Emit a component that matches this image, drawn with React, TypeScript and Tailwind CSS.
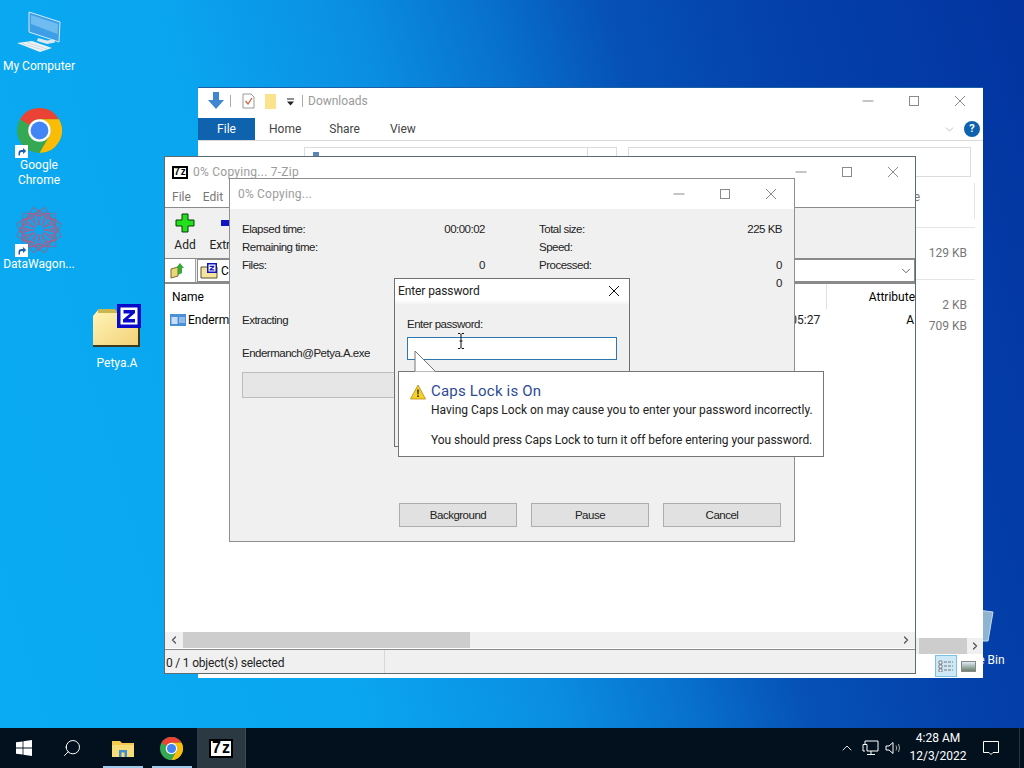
import React from "react";
import { Search, ChevronUp, ChevronDown, ChevronLeft, ChevronRight } from "lucide-react";

function Controls({ color = "#8a8a8a" }: { color?: string }) {
  return (
    <div className="flex items-center gap-[34px]">
      <svg width="12" height="12" viewBox="0 0 12 12"><path d="M.5 6H11.5" stroke={color} strokeWidth="1" /></svg>
      <svg width="12" height="12" viewBox="0 0 12 12"><rect x="1.5" y="1.5" width="9" height="9" fill="none" stroke={color} /></svg>
      <svg width="12" height="12" viewBox="0 0 12 12"><path d="M1 1L11 11M11 1L1 11" stroke={color} /></svg>
    </div>
  );
}

function Logo7z({ w = 18, h = 14 }: { w?: number; h?: number }) {
  return (
    <div style={{ width: w, height: h }} className="bg-black flex items-center justify-center">
      <div className="bg-white flex items-center justify-center gap-px w-[calc(100%-4px)] h-[calc(100%-4px)] font-['Liberation_Sans',sans-serif] font-bold text-black" style={{ fontSize: h - 3, lineHeight: 1 }}>
        <span>7</span><span>z</span>
      </div>
    </div>
  );
}

function ChromeIcon({ size }: { size: number }) {
  return (
    <svg width={size} height={size} viewBox="0 0 48 48">
      <circle cx="24" cy="24" r="24" fill="#34a853" />
      <path d="M24 0A24 24 0 0 1 44.8 12H24A12 12 0 0 0 13.6 18L3.2 12A24 24 0 0 1 24 0Z" fill="#ea4335" />
      <path d="M44.8 12A24 24 0 0 1 24 48L34.4 30A12 12 0 0 0 34.4 18 L24 12Z" fill="#fbbc05" />
      <circle cx="24" cy="24" r="12" fill="#fff" />
      <circle cx="24" cy="24" r="9.5" fill="#4285f4" />
    </svg>
  );
}

function Shortcut() {
  return (
    <svg width="13" height="13" viewBox="0 0 13 13" className="absolute left-[15px] bottom-0">
      <rect width="13" height="13" fill="#fff" />
      <path d="M3.5 10.5V8A3 3 0 0 1 6.5 5H8V3l3.2 3L8 9V7H6.5A1.5 1.5 0 0 0 5 8.5V10.5Z" fill="#1a5fb4" />
    </svg>
  );
}

function WagonIcon() {
  const outer = [0, 30, 60, 90, 120, 150];
  const inner = [0, 30, 60, 90, 120, 150, 180, 210, 240, 270, 300, 330];
  return (
    <svg width="46" height="46" viewBox="0 0 46 46" fill="none">
      {outer.map((a) => (
        <g key={a} transform={`rotate(${a} 23 23)`}>
          <rect x="6.5" y="6.5" width="33" height="33" stroke="#6d78a8" strokeWidth="1.2" opacity="0.75" />
        </g>
      ))}
      {inner.map((a) => (
        <g key={a} transform={`rotate(${a} 23 23)`}>
          <rect x="17" y="6" width="12" height="12" stroke="#b55a84" strokeWidth="1.2" opacity="0.85" transform="rotate(45 23 12)" />
        </g>
      ))}
      <circle cx="23" cy="23" r="5" fill="#12a3ee" />
    </svg>
  );
}

function ComputerIcon() {
  return (
    <svg width="44" height="44" viewBox="0 0 44 44">
      <path d="M12 2L43 12L42 32L12 22Z" fill="#3f9fe6" stroke="#cfeafb" strokeWidth="1" />
      <path d="M14 5L41 14L40.5 24L14 14Z" fill="#6fbcf0" />
      <path d="M21 28L30 30.5L37 29.5L38 32.5L30 34L20 31Z" fill="#dce8ee" />
      <path d="M0 33L15 31L35 38L23 42Z" fill="#eaf2f6" />
      <path d="M5 33.5L26 40M10 32.5L30 39" stroke="#b9c9d2" strokeWidth="0.6" />
    </svg>
  );
}

function ZipFolder() {
  return (
    <svg width="50" height="44" viewBox="0 0 50 44">
      <defs>
        <linearGradient id="zf" x1="0" y1="0" x2="1" y2="1">
          <stop offset="0" stopColor="#fff5b8" />
          <stop offset="1" stopColor="#f3d178" />
        </linearGradient>
      </defs>
      <path d="M1 41V12L6 6H22L26 9H47V41Z" fill="url(#zf)" />
      <path d="M1 41H47V43H1Z" fill="#3c3a1c" />
      <path d="M47 22V43" stroke="#3c3a1c" strokeWidth="2" />
      <path d="M6 5H23L26 9H6Z" fill="#c9b650" />
      <rect x="25" y="0" width="24" height="24" fill="#0a0ac8" />
      <rect x="28.5" y="3.5" width="17" height="17" fill="#fff" />
      <path d="M31.5 6H43V9L36 15H43V18.5H31V15.5L38 9.5H31.5Z" fill="#0a0ac8" />
    </svg>
  );
}

function SmallZip() {
  return (
    <svg width="18" height="16" viewBox="0 0 18 16">
      <path d="M1 15V4H17V15Z" fill="#f5e49c" stroke="#5a5330" />
      <rect x="7" y="0" width="10" height="10" fill="#1313b8" />
      <rect x="8.5" y="1.5" width="7" height="7" fill="#fff" />
      <path d="M9.7 2.8H14.3V4L11.5 6.3H14.3V7.4H9.6V6.3L12.5 3.9H9.7Z" fill="#1313b8" />
    </svg>
  );
}

function Desktop({ label, className, children }: { label: string; className: string; children: React.ReactNode }) {
  return (
    <div className={`absolute w-[78px] flex flex-col items-center text-white text-[12px] leading-[15px] text-center ${className}`}>
      {children}
      <span className="block">{label}</span>
    </div>
  );
}

function Stat({ label, value }: { label: string; value?: string }) {
  return (
    <div className="flex justify-between h-[18px] items-center">
      <span>{label}</span>
      <span>{value}</span>
    </div>
  );
}

function Btn({ children }: { children: React.ReactNode }) {
  return (
    <div className="w-[118px] h-[24px] pt-[1px] bg-[#e1e1e1] border border-[#adadad] flex items-center justify-center text-[#222]">{children}</div>
  );
}

const ui = "font-['Roboto','Liberation_Sans',sans-serif]";
const tahoma = "font-['Liberation_Sans',sans-serif] text-[11.5px] tracking-[-0.5px]";

export default function App() {
  return (
    <div className={`relative w-[1024px] h-[768px] overflow-hidden flex flex-col ${ui} bg-[linear-gradient(74deg,#0aabf2_0%,#0aa6f0_30%,#0a8ee2_46%,#0873cf_56%,#0652b6_66%,#0442ac_78%,#0334a0_100%)]`}>
      {/* Desktop icons */}
      <Desktop label="My Computer" className="left-0 top-[10px] gap-[5px]"><ComputerIcon /></Desktop>
      <Desktop label="Google Chrome" className="left-0 top-[108px]">
        <div className="relative w-[78px] h-[50px] flex justify-center">
          <ChromeIcon size={45} />
          <Shortcut />
        </div>
      </Desktop>
      <Desktop label="DataWagon..." className="left-0 top-[207px]">
        <div className="relative w-[78px] h-[50px] flex justify-center">
          <WagonIcon />
          <Shortcut />
        </div>
      </Desktop>
      <Desktop label="Petya.A" className="left-[78px] top-[304px] gap-[8px]"><ZipFolder /></Desktop>
      <Desktop label="Recycle Bin" className="left-[935px] top-[605px] gap-[10px]">
        <svg width="44" height="38" viewBox="0 0 44 38">
          <path d="M10 3L41 7L36 36L14 36Z" fill="#8fb4d0" stroke="#c9dcea" />
        </svg>
      </Desktop>

      {/* Explorer window */}
      <div className="absolute left-[198px] top-[87px] w-[785px] h-[591px] bg-white border-t border-[#1a5fa8] flex flex-col text-[#555]">
        <div className="h-[30px] flex items-center pl-[9px] pb-[4px] shrink-0">
          <svg width="18" height="18" viewBox="0 0 18 18"><path d="M6 0H12V8H17L9 17L1 8H6Z" fill="#3f86cf" /></svg>
          <span className="w-px h-[12px] bg-[#aaa] ml-[5px] mr-[11px]" />
          <svg width="13" height="16" viewBox="0 0 13 16"><path d="M1 1H9L12 4V15H1Z" fill="#fff" stroke="#9a9a9a" /><path d="M3.5 8L6 11L10 5" fill="none" stroke="#d0623a" strokeWidth="1.3" /></svg>
          <svg width="14" height="17" viewBox="0 0 14 17" className="ml-[9px]"><path d="M1 1H12V16H1Z" fill="#fbe28d" /></svg>
          <svg width="9" height="9" viewBox="0 0 9 9" className="ml-[8px] mt-[2px]"><path d="M1 1H8" stroke="#222" /><path d="M1 3.5H8L4.5 7.5Z" fill="#222" /></svg>
          <span className="w-px h-[12px] bg-[#aaa] ml-[7px] mr-[5px]" />
          <span className="text-[12px] text-[#9a9a9a]">Downloads</span>
          <div className="ml-auto pr-[17px]"><Controls /></div>
        </div>
        <div className="h-[23px] flex items-center border-b border-[#dadada] shrink-0 text-[12px] text-[#444]">
          <div className="w-[57px] h-full bg-[#0f62ad] text-white flex items-center justify-center">File</div>
          <span className="ml-[14px]">Home</span>
          <span className="ml-[28px]">Share</span>
          <span className="ml-[30px]">View</span>
          <ChevronDown size={13} strokeWidth={1.4} className="ml-auto text-[#aaa]" />
          <div className="ml-[8px] mr-[3px] w-[16px] h-[16px] rounded-full bg-[#0f62ad] text-white flex items-center justify-center text-[11px] font-bold">?</div>
        </div>
        <div className="h-[36px] shrink-0 flex items-start pt-[6px] pl-[106px]">
          <div className="h-[30px] w-[313px] border border-[#dcdcdc] flex justify-end pl-[8px]">
            <div className="w-[6px] h-[5px] bg-[#5b85b8] mt-[4px] mr-auto" />
            <div className="w-[29px] h-full border-l border-[#dcdcdc]" />
          </div>
          <div className="h-[30px] w-[343px] border border-[#dcdcdc] ml-[11px]" />
        </div>
        <div className="flex-1 flex flex-col items-end text-[12px] text-[#777]">
          <div className="h-[51px] w-[calc(100%-8px)] shrink-0 flex justify-end border-b border-[#e5e5e5] mr-[8px]">
            <span className="pt-[11px] mr-[54px]">Size</span>
            <span className="w-px h-[36px] mt-[6px] bg-[#e5e5e5]" />
          </div>
          <div className="h-[52px] w-[calc(100%-8px)] shrink-0 flex items-center justify-end mr-[8px] pr-[8px] pb-[2px] border-b border-[#e5e5e5]">129 KB</div>
          <div className="h-[21px] mt-[14px] pr-[16px] flex items-center">2 KB</div>
          <div className="h-[21px] pr-[16px] flex items-center">709 KB</div>
        </div>
        <div className="h-[16px] shrink-0 flex items-center justify-end bg-[#f0f0f0] mb-[1px]">
          <div className="w-[48px] h-full bg-[#cdcdcd]" />
          <ChevronRight size={12} strokeWidth={2.5} className="mx-[2px] text-[#555]" />
        </div>
        <div className="h-[22px] shrink-0 flex items-center justify-end pr-[7px] mb-[1px]">
          <div className="w-[22px] h-[22px] bg-[#cde8f7] border border-[#7cc0e4] flex items-center justify-center">
            <svg width="16" height="12" viewBox="0 0 16 12"><path d="M1 1H4V4H1ZM1 5H4V8H1ZM1 9H4V12H1Z" fill="#fff" stroke="#555" strokeWidth="0.7" /><path d="M6 2H15M6 6H15M6 10H15" stroke="#777" strokeDasharray="3 1" /></svg>
          </div>
          <div className="ml-[4px] w-[15px] h-[11px] bg-[linear-gradient(#dcebf5,#6a7f6a)] border border-[#888]" />
        </div>
      </div>

      {/* 7-Zip window */}
      <div className="absolute left-[164px] top-[156px] w-[752px] h-[518px] bg-white border border-[#5f6b73] flex flex-col text-[12px]">
        <div className="h-[30px] shrink-0 flex items-center pl-[7px] pr-[16px]">
          <Logo7z w={16} h={13} />
          <span className="ml-[5px] text-[12px] text-[#9c9c9c] tracking-[0.25px]">0% Copying... 7-Zip</span>
          <div className="ml-auto"><Controls /></div>
        </div>
        <div className="h-[21px] shrink-0 flex items-center pl-[7px] gap-[12px] pb-[1px] text-[#777] border-b border-[#8a8a8a]">
          <span>File</span><span>Edit</span>
        </div>
        <div className="h-[51px] shrink-0 bg-[#f0f0f0] flex pl-[5px] gap-[13px] border-b border-[#8a8a8a]">
          <div className="w-[30px] flex flex-col items-center pt-[5px] text-[#222]">
            <svg width="20" height="20" viewBox="0 0 20 20"><path d="M7 1H13V7H19V13H13V19H7V13H1V7H7Z" fill="#22e01a" stroke="#0a3a0a" /></svg>
            <span className="mt-[3px]">Add</span>
          </div>
          <div className="w-[30px] flex flex-col items-center pt-[5px] text-[#222] relative">
            <svg width="16" height="20" viewBox="0 0 16 20"><rect x="1" y="7" width="14" height="6" fill="#1313c8" /></svg>
            <span className="mt-[3px]">Extract</span>
          </div>
        </div>
        <div className="h-[25px] shrink-0 flex bg-[#f0f0f0] border-b-2 border-[#8a8a8a]">
          <div className="w-[31px] bg-white border-r border-[#a0a0a0] flex items-center justify-center pr-[6px]">
            <svg width="15" height="17" viewBox="0 0 15 17"><path d="M1 16V7L8 5V14Z" fill="#e8d878" stroke="#7a6a2a" /><path d="M8 13V6H6L10 1L14 6H12V11Z" fill="#3aa838" /></svg>
          </div>
          <div className="flex-1 ml-px bg-white border border-[#8a8a8a] flex items-center pl-[2px]">
            <SmallZip />
            <span className="ml-[3px]">C:\</span>
            <ChevronDown size={14} strokeWidth={1.4} className="ml-auto mr-[1px] text-[#444]" />
          </div>
        </div>
        <div className="flex-1 min-h-0 flex flex-col">
          <div className="h-[25px] shrink-0 flex items-center pl-[7px]">
            <span className="pt-[1px]">Name</span>
            <span className="w-px h-[25px] bg-[#e0e0e0] ml-auto mr-[42px]" />
            <span className="pt-[1px]">Attribute</span>
          </div>
          <div className="h-[22px] shrink-0 flex items-center pl-[5px]">
            <svg width="16" height="12" viewBox="0 0 16 12"><rect width="16" height="12" fill="#4a90d9" /><rect x="1.5" y="3" width="6" height="7" fill="#c7def4" /><path d="M9 4H15M9 6H15M9 8H15" stroke="#d8e8f7" /></svg>
            <span className="ml-[2px]">Endermanch@Petya.A.exe</span>
            <span className="ml-auto text-[#222]">05:27</span>
            <span className="ml-[86px] mr-[1px]">A</span>
          </div>
          <div className="flex-1" />
          <div className="h-[16px] shrink-0 flex items-center bg-[#f0f0f0] mb-[1px] px-[3px]">
            <ChevronLeft size={12} strokeWidth={2.5} className="text-[#555]" />
            <div className="w-[287px] h-full bg-[#cdcdcd] ml-[3px]" />
            <ChevronRight size={12} strokeWidth={2.5} className="ml-auto text-[#555]" />
          </div>
          <div className="h-[24px] shrink-0 bg-[#f0f0f0] border-t border-[#8a8a8a] flex items-center pl-[1px] text-[#222] tracking-[-0.2px]">
            <span className="w-[218px] pt-[2px]">0 / 1 object(s) selected</span>
            <span className="w-px h-full bg-[#d8d8d8]" />
          </div>
        </div>
      </div>

      {/* Progress dialog */}
      <div className={`absolute left-[229px] top-[178px] w-[566px] h-[364px] bg-[#f0f0f0] border border-[#8f8f8f] flex flex-col ${tahoma} text-[#222]`}>
        <div className={`h-[30px] shrink-0 bg-white flex items-center pl-[8px] pr-[17px] ${ui} text-[12px] tracking-[0.2px] text-[#9c9c9c]`}>
          <span>0% Copying...</span>
          <div className="ml-auto"><Controls /></div>
        </div>
        <div className="flex-1 flex flex-col px-[12px] pt-[12px] pb-[14px]">
          <div className="grid grid-cols-[243px_243px] gap-x-[54px]">
            <div className="flex flex-col">
              <Stat label="Elapsed time:" value="00:00:02" />
              <Stat label="Remaining time:" />
              <Stat label="Files:" value="0" />
            </div>
            <div className="flex flex-col">
              <Stat label="Total size:" value="225 KB" />
              <Stat label="Speed:" />
              <Stat label="Processed:" value="0" />
              <Stat label="Compressed:" value="0" />
            </div>
          </div>
          <div className="mt-[19px] h-[18px] flex items-center">Extracting</div>
          <div className="mt-[15px] h-[18px] flex items-center">Endermanch@Petya.A.exe</div>
          <div className="mt-[9px] h-[26px] w-[540px] bg-[#e6e6e6] border border-[#bcbcbc]" />
          <div className="mt-auto mr-[1px] flex justify-end gap-[14px]">
            <Btn>Background</Btn>
            <Btn>Pause</Btn>
            <Btn>Cancel</Btn>
          </div>
        </div>
      </div>

      {/* Password dialog */}
      <div className={`absolute left-[394px] top-[278px] w-[236px] h-[169px] bg-[#f0f0f0] border border-[#6f6f6f] flex flex-col text-[#222]`}>
        <div className={`h-[26px] shrink-0 bg-[linear-gradient(#fff_80%,#f0f0f0)] flex items-center pl-[3px] pr-[9px] pb-[2px] ${ui} text-[12px] tracking-[-0.1px]`}>
          <span>Enter password</span>
          <svg width="12" height="12" viewBox="0 0 12 12" className="ml-auto"><path d="M1 1L11 11M11 1L1 11" stroke="#111" /></svg>
        </div>
        <div className={`flex flex-col pl-[12px] pt-[12px] ${tahoma}`}>
          <span className="leading-[15px]">Enter password:</span>
          <div className="mt-[5px] w-[210px] h-[23px] bg-white border border-[#2b78b5]" />
        </div>
      </div>

      {/* I-beam cursor */}
      <svg width="8" height="16" viewBox="0 0 8 16" className="absolute left-[457px] top-[333px]">
        <path d="M1 .5H3L4 1.5L5 .5H7M4 1.5V14.5M1 15.5H3L4 14.5L5 15.5H7M2.5 8H5.5" stroke="#111" fill="none" />
      </svg>

      {/* Caps lock balloon */}
      <svg width="24" height="22" viewBox="0 0 24 22" className="absolute left-[414px] top-[350px] z-10">
        <path d="M1 1V21.5H21Z" fill="#fff" />
        <path d="M1 21V1L21 21" fill="none" stroke="#767676" />
      </svg>
      <div className="absolute left-[398px] top-[371px] w-[426px] h-[86px] bg-white border border-[#767676] flex pl-[11px] pt-[9px]">
        <svg width="16" height="16" viewBox="0 0 16 16" className="mt-[3px] shrink-0">
          <path d="M8 1L15.5 15H.5Z" fill="#f7cf2b" stroke="#b58a10" strokeWidth="0.8" />
          <path d="M7.2 5.5H8.8L8.5 10.5H7.5ZM7.2 11.5H8.8V13H7.2Z" fill="#222" />
        </svg>
        <div className="ml-[5px] flex flex-col text-[#222] text-[12px] leading-[15px] tracking-[-0.05px]">
          <span className="text-[15px] leading-[20px] tracking-[0.2px] text-[#2e4a95]">Caps Lock is On</span>
          <span className="mt-[2px] tracking-[0px]">Having Caps Lock on may cause you to enter your password incorrectly.</span>
          <span className="mt-[15px]">You should press Caps Lock to turn it off before entering your password.</span>
        </div>
      </div>

      {/* Taskbar */}
      <div className="absolute left-0 right-0 bottom-0 h-[40px] bg-[#03111f] flex items-center text-white">
        <div className="w-[48px] h-full flex items-center justify-center">
          <svg width="16" height="16" viewBox="0 0 16 16"><path d="M0 2.3L6.6 1.4V7.6H0ZM7.4 1.3L16 0V7.6H7.4ZM0 8.4H6.6V14.6L0 13.7ZM7.4 8.4H16V16L7.4 14.7Z" fill="#fff" /></svg>
        </div>
        <div className="w-[48px] h-full flex items-center justify-center">
          <Search size={20} strokeWidth={1.2} className="-scale-x-100" />
        </div>
        <div className="relative w-[49px] h-full flex items-center justify-center ml-[2px]">
          <svg width="22" height="18" viewBox="0 0 22 18"><path d="M0 2H8L10 4H22V18H0Z" fill="#f3c94f" /><rect x="0" y="6" width="22" height="12" fill="#f9dc7a" /><path d="M7 18V11H15V18H12.5V13.5H9.5V18Z" fill="#3f8fd0" /></svg>
          <span className="absolute bottom-0 left-[5px] right-[4px] h-[2px] bg-[#9cc8ea]" />
        </div>
        <div className="relative w-[49px] h-full flex items-center justify-center">
          <ChromeIcon size={23} />
          <span className="absolute bottom-0 left-[5px] right-[4px] h-[2px] bg-[#9cc8ea]" />
        </div>
        <div className="w-[49px] h-full bg-[#2b3a42] flex items-center justify-center border-r border-[#3d4a52] ml-[1px]">
          <Logo7z w={24} h={19} />
        </div>
        <div className="ml-auto flex items-center h-full">
          <ChevronUp size={16} strokeWidth={1.3} />
          <svg width="17" height="16" viewBox="0 0 17 16" className="ml-[7px]" fill="none" stroke="#fff"><path d="M3 4.5V1H16V11H5V4.5H1V11H3" /><path d="M9 11V14.5M5 14.5H13" /></svg>
          <svg width="17" height="14" viewBox="0 0 17 14" className="ml-[6px]" fill="none" stroke="#fff"><path d="M1 5H4L8 1.5V12.5L4 9H1Z" /><path d="M11 4.5Q12.5 7 11 9.5M13.5 3Q15.5 7 13.5 11" stroke="#aaa" /></svg>
          <div className="w-[72px] flex flex-col items-center text-[12px] leading-[18px] pb-[2px]">
            <span>4:28 AM</span>
            <span>12/3/2022</span>
          </div>
          <svg width="16" height="16" viewBox="0 0 16 16" className="ml-[9px]" fill="none" stroke="#fff"><path d="M.5 1.5H15.5V12.5H10L8 14.5L6 12.5H.5Z" /></svg>
          <span className="w-px h-full bg-[#2a3640] ml-[20px] mr-[4px]" />
        </div>
      </div>
    </div>
  );
}
